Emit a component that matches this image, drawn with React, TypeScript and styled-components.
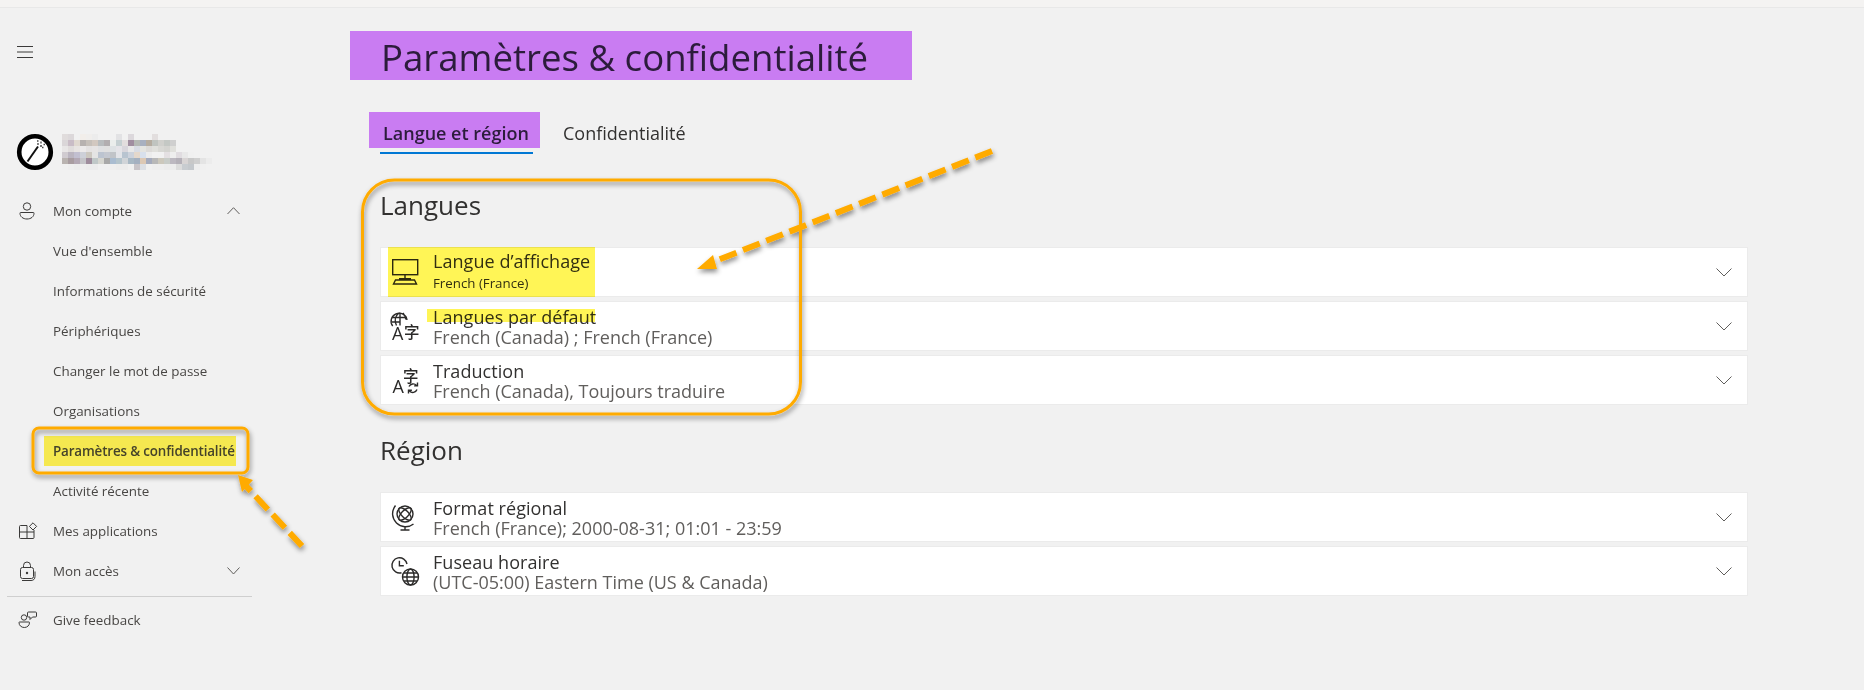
import React from "react";
import styled, { createGlobalStyle } from "styled-components";

const FONT = `"Open Sans", "Noto Sans CJK SC", sans-serif`;

const GlobalStyle = createGlobalStyle`
  html, body {
    margin: 0;
    padding: 0;
    background: #f1f1f1;
    font-family: ${FONT};
  }
  * { box-sizing: border-box; }
`;

const Page = styled.div`
  position: relative;
  width: 1864px;
  height: 690px;
  overflow: hidden;
  background: #f1f1f1;
`;

const TopStrip = styled.div`
  height: 8px;
  background: #f4f3f2;
  border-bottom: 1px solid #e8e8e8;
`;

const Shell = styled.div`
  display: flex;
`;

const Sidebar = styled.aside`
  width: 350px;
  flex: none;
  padding-top: 38px;
`;

const MenuButton = styled.div`
  display: flex;
  margin-left: 17px;
  height: 12px;
`;

const Profile = styled.div`
  display: flex;
  align-items: center;
  gap: 8px;
  margin: 75px 0 20px 16px;
  height: 38px;
`;

const Nav = styled.nav`
  width: 252px;
`;

const NavRow = styled.div<{ $sub?: boolean }>`
  display: flex;
  align-items: center;
  height: 40px;
  padding: 0 12px 0 ${(p) => (p.$sub ? "53px" : "18px")};
  font-size: 13.4px;
  color: #484644;
`;

const NavIcon = styled.span`
  display: flex;
  width: 20px;
  margin-right: 15px;
`;

const NavLabel = styled.span<{ $active?: boolean }>`
  ${(p) =>
    p.$active &&
    `
    margin-left: -9px;
    padding: 0 0 0 9px;
    width: 192px;
    line-height: 30px;
    font-weight: 600;
    white-space: nowrap;
    letter-spacing: -0.15px;
    color: #45432a;
    background: #f5e850;
  `}
`;

const NavChevron = styled.span`
  display: flex;
  margin-left: auto;
`;

const Divider = styled.div`
  height: 1px;
  margin: 5px 0 3px 7px;
  background: #cfcfcf;
`;

const Main = styled.main`
  flex: none;
  width: 1398px;
  padding-top: 23px;
`;

const Title = styled.h1`
  display: block;
  width: 562px;
  height: 49px;
  margin: 0;
  padding-left: 31px;
  font-size: 36.6px;
  line-height: 52px;
  font-weight: 400;
  white-space: nowrap;
  color: #2c1c3c;
  background: #c97cf2;
`;

const Tabs = styled.div`
  display: flex;
  margin: 32px 0 0 19px;
`;

const Tab = styled.div`
  display: flex;
  flex-direction: column;
`;

const TabLabel = styled.div<{ $active?: boolean }>`
  height: 36px;
  width: ${(p) => (p.$active ? "171px" : "auto")};
  padding-left: ${(p) => (p.$active ? "14px" : "23px")};
  line-height: 43px;
  font-size: 18px;
  white-space: nowrap;
  font-weight: ${(p) => (p.$active ? 600 : 400)};
  color: ${(p) => (p.$active ? "#2c1c3c" : "#323130")};
  background: ${(p) => (p.$active ? "#c97cf2" : "transparent")};
`;

const TabLine = styled.div`
  width: 153px;
  height: 2px;
  margin: 4px 0 0 11px;
  background: #0078d4;
`;

const Section = styled.section`
  margin: 35px 0 0 30px;
`;

const Heading = styled.h2`
  height: 32px;
  margin: 0 0 26px;
  font-size: 26px;
  line-height: 32px;
  font-weight: 400;
  color: #323130;
`;

const Rows = styled.div`
  display: flex;
  flex-direction: column;
  gap: 4px;
  margin-bottom: 29px;
`;

const Row = styled.div`
  position: relative;
  display: flex;
  width: 1368px;
  height: 50px;
  padding-left: 10px;
  background: #ffffff;
  border: 1px solid #ebebeb;
`;

const Highlight = styled.div<{ $left: number; $top: number; $width: number; $height: number }>`
  position: absolute;
  left: ${(p) => p.$left}px;
  top: ${(p) => p.$top}px;
  width: ${(p) => p.$width}px;
  height: ${(p) => p.$height}px;
  background: #fff556;
  mix-blend-mode: multiply;
`;

const RowIcon = styled.div`
  display: flex;
  align-items: center;
  width: 28px;
  flex: none;
  margin-right: 14px;
`;

const RowText = styled.div<{ $small?: boolean }>`
  display: flex;
  flex-direction: column;
  padding-top: ${(p) => (p.$small ? "3px" : "5px")};
`;

const RowTitle = styled.div`
  font-size: 18px;
  line-height: 20px;
  letter-spacing: 0.05px;
  color: #323130;
`;

const RowSub = styled.div<{ $small?: boolean }>`
  font-size: ${(p) => (p.$small ? "13.3px" : "18px")};
  line-height: 20px;
  margin-top: ${(p) => (p.$small ? "2px" : "0")};
  color: ${(p) => (p.$small ? "#323130" : "#605e5c")};
`;

const RowChevron = styled.div`
  display: flex;
  align-items: center;
  margin-left: auto;
  margin-right: 15px;
`;

const Annotations = styled.svg`
  position: absolute;
  left: 0;
  top: 0;
  pointer-events: none;
`;

const IconSvg = styled.svg`
  overflow: visible;
`;

const Chevron = ({ up, w = 16, h = 8, color = "#605e5c" }: { up?: boolean; w?: number; h?: number; color?: string }) => (
  <svg width={w} height={h + 1} viewBox={`0 0 ${w} ${h + 1}`}>
    <polyline
      points={up ? `0.5,${h} ${w / 2},0.7 ${w - 0.5},${h}` : `0.5,0.5 ${w / 2},${h} ${w - 0.5},0.5`}
      fill="none"
      stroke={color}
      strokeWidth="1"
    />
  </svg>
);

const IconStroke = { fill: "none", stroke: "#3b3a39", strokeWidth: 1 };
const RowStroke = { fill: "none", stroke: "#2b2a29", strokeWidth: 1.4 };

const MonitorIcon = () => (
  <IconSvg width="28" height="28" viewBox="0 0 28 28">
    <rect x="1.7" y="1.7" width="25" height="15" {...RowStroke} />
    <path d="M14 17v4M8 20.800h12M4.500 22h19l2 4H2.500z" {...RowStroke} />
  </IconSvg>
);

const GlyphA = styled.text`
  font-family: "Open Sans", sans-serif;
  fill: #2b2a29;
`;

const GlyphZi = styled.text`
  font-family: "Noto Sans CJK SC", sans-serif;
  font-weight: 500;
  fill: #2b2a29;
`;

const LanguageIcon = () => (
  <IconSvg width="28" height="28" viewBox="0 0 28 28">
    <path d="M1.700 14A8 8 0 1 1 16 8M9 0.500v13M1 5.500h15M1 10h8M5.500 13.500c-2-4-2-9 3-13M12 1c1.700 2 2.700 4 2.700 6.500" {...RowStroke} />
    <GlyphA x="1" y="28" fontSize="18">A</GlyphA>
    <GlyphZi x="13" y="25.500" fontSize="15.500">字</GlyphZi>
  </IconSvg>
);

const TranslateIcon = () => (
  <IconSvg width="28" height="28" viewBox="0 0 28 28">
    <GlyphZi x="12" y="15.500" fontSize="15.500">字</GlyphZi>
    <GlyphA x="1.500" y="27" fontSize="18">A</GlyphA>
    <path d="M18 20.500a4.500 4.500 0 0 1 7.500-1M26.500 16.500v3.400h-3.400M26 23.500a4.500 4.500 0 0 1-7.500 1.500M17.500 27.500v-3.200h3.400" {...RowStroke} />
  </IconSvg>
);

const GlobeStandIcon = () => (
  <IconSvg width="28" height="28" viewBox="0 0 28 28">
    <circle cx="14" cy="11" r="8" {...RowStroke} />
    <ellipse cx="14" cy="11" rx="3.500" ry="8" transform="rotate(45 14 11)" {...RowStroke} />
    <ellipse cx="14" cy="11" rx="3.500" ry="8" transform="rotate(-45 14 11)" {...RowStroke} />
    <path d="M4.500 2.500c-4.500 6-3.500 13 1 17.500s12 5 17 1M14 23v4M9.500 27h9" {...RowStroke} />
  </IconSvg>
);

const ClockGlobeIcon = () => (
  <IconSvg width="28" height="28" viewBox="0 0 28 28">
    <path d="M10.500 15.700A7.600 7.600 0 1 1 16 7" {...RowStroke} />
    <path d="M8.400 3.800v5h4.400" {...RowStroke} />
    <circle cx="19.500" cy="20" r="8" {...RowStroke} />
    <ellipse cx="19.500" cy="20" rx="3.600" ry="8" {...RowStroke} />
    <path d="M11.500 20h16M13 16h13M13 24h13" {...RowStroke} />
  </IconSvg>
);

const HamburgerIcon = () => (
  <svg width="16" height="12" viewBox="0 0 16 12">
    <path d="M0 0.500h16M0 6h16M0 11.500h16" fill="none" stroke="#3b3a39" strokeWidth="1" />
  </svg>
);

const PersonIcon = () => (
  <svg width="20" height="18" viewBox="0 0 20 18">
    <circle cx="9" cy="4.500" r="3.700" {...IconStroke} />
    <path d="M2.500 10.500h13c.4 0 .5.300.5.700 0 3.500-3 5.800-7 5.800s-7-2.300-7-5.800c0-.4.100-.7.500-.7z" {...IconStroke} />
  </svg>
);

const AppsIcon = () => (
  <svg width="20" height="18" viewBox="0 0 20 18">
    <path d="M2.500 3.500h6.500v13H2.500a1 1 0 0 1-1-1v-11a1 1 0 0 1 1-1zM1.500 10h14.500M9 16.500h6a1 1 0 0 0 1-1V8" {...IconStroke} />
    <path d="M15 0.800l3.600 3.600-3.600 3.600-3.600-3.600z" {...IconStroke} />
  </svg>
);

const LockIcon = () => (
  <svg width="20" height="20" viewBox="0 0 20 20">
    <path d="M5.500 6.500V4.500a3.500 3.500 0 0 1 7 0v2" {...IconStroke} />
    <rect x="2.500" y="6.500" width="13" height="11" rx="2" {...IconStroke} />
    <circle cx="9" cy="12" r="1.200" fill="#3b3a39" />
    <path d="M4 19.500h9c2.500 0 4-1.500 4-4v-5" {...IconStroke} />
  </svg>
);

const FeedbackIcon = () => (
  <svg width="20" height="18" viewBox="0 0 20 18">
    <circle cx="6" cy="6.500" r="2.700" {...IconStroke} />
    <path d="M1.500 11h9.500c.3 0 .5.200.5.500 0 3-2.300 5-5.200 5S1 14.500 1 11.500c0-.3.200-.5.500-.5z" {...IconStroke} />
    <path d="M10.500 1h7a1 1 0 0 1 1 1v3a1 1 0 0 1-1 1h-3l-2.500 2.500V6h-1.500a1 1 0 0 1-1-1V2a1 1 0 0 1 1-1z" {...IconStroke} />
  </svg>
);

const WandAvatar = () => (
  <svg width="38" height="38" viewBox="0 0 38 38">
    <circle cx="19" cy="19" r="15.800" fill="#fff" stroke="#000" strokeWidth="4.600" />
    <path d="M11.500 28.500L22 13.500" stroke="#111" strokeWidth="2" fill="none" />
    <path d="M22 10v2M25 8.500v2M24 13h2M27.500 11.500h1.500M21 8h1.500M26 14.500h1.500" stroke="#444" strokeWidth="1.300" fill="none" />
  </svg>
);

const NAME_PIXELS: string[][] = [
  ["e0dcdc", "dcd8da", "f1f1f1", "f2eeea", "f0eeec", "ececec", "f1f1f1", "f1f1f1", "f1f1f1", "e2e2e4", "f1f1f1", "dcd8dc", "f1f1f1", "f1f1f1", "f1f1f1", "e2dede", "f1f1f1"],
  ["dad6d8", "c9bcc6", "e0d8d0", "b7b2b0", "c6c0ba", "d2c8c0", "b8bcbe", "b2aeb0", "eaeeec", "c5d0d2", "e2dede", "a08ea0", "b4b8b4", "a8b0c0", "b5aca0", "c0c4c0", "d0d0cc", "c4c8c4", "cfcfcf"],
  ["e8e6e6", "e0dcdc", "e8e4e2", "eceaea", "e4e2e2", "e6e4e4", "dfe0e2", "e0e0e0", "dde2e4", "e4e4e8", "d8d6dc", "e8e8e8", "d8dce4", "e4e4e0", "dcdad8", "e0e0dc", "d8d8d4", "d4d4d0", "e0e0dc"],
  ["d0cbd0", "bbb5c0", "c2bfd0", "cdd0d8", "ccc8c0", "e4e4e4", "bcc4d0", "c4c8d0", "c0c4c8", "e2e4e8", "b8c4d0", "ccd2dc", "e4d8cc", "d8e0ec", "ececec", "f1f1f1", "f1f1f1", "e4e0e2", "eeeeee", "e0dce0", "e8e8e8", "f0f0f0"],
  ["b9b3b0", "a89ca0", "b3a8b4", "c4c4c8", "9e8c9c", "c0c8c8", "d6d6d0", "a8a8a8", "a9bcd0", "b4c4cc", "d0d4d8", "a8b8c4", "a4b0c0", "dcc8b4", "a4aabc", "b8b8b8", "ccc8bc", "c8ccc8", "bcb8c0", "b4b0b8", "d8d4d4", "c8c8c8", "cfcfcf", "e4e4e4", "ececec"],
  ["f0f0f0", "eeeeee", "ececec", "eeeeee", "ececec", "ececec", "f0f0f0", "f0f0f0", "eeeeee", "ececec", "ececec", "f0f0f0", "c8c4c8", "dcdfe4", "f0f0f0", "eeeeee", "eeeeee", "ececec", "ececec", "dcdcdc", "c8ccd0", "c4c8cc", "eeeeee", "f0f0f0"],
];

const BlurredName = () => (
  <svg width="150" height="36" viewBox="0 0 150 36" shapeRendering="crispEdges">
    {NAME_PIXELS.map((row, y) =>
      row.map((c, x) => <rect key={`${x}-${y}`} x={x * 6} y={y * 6} width="6" height="6" fill={`#${c}`} />)
    )}
  </svg>
);

interface SettingRow {
  icon: React.ReactNode;
  title: string;
  sub: string;
  small?: boolean;
  marks?: { left: number; top: number; width: number; height: number };
}

const languageRows: SettingRow[] = [
  { icon: <MonitorIcon />, title: "Langue d’affichage", sub: "French (France)", small: true, marks: { left: 7, top: -1, width: 207, height: 50 } },
  { icon: <LanguageIcon />, title: "Langues par défaut", sub: "French (Canada) ; French (France)", marks: { left: 46, top: 7, width: 168, height: 13 } },
  { icon: <TranslateIcon />, title: "Traduction", sub: "French (Canada), Toujours traduire" },
];

const regionRows: SettingRow[] = [
  { icon: <GlobeStandIcon />, title: "Format régional", sub: "French (France); 2000-08-31; 01:01 - 23:59" },
  { icon: <ClockGlobeIcon />, title: "Fuseau horaire", sub: "(UTC-05:00) Eastern Time (US & Canada)" },
];

const subLinks = ["Vue d'ensemble", "Informations de sécurité", "Périphériques", "Changer le mot de passe", "Organisations"];

const SettingsRows = ({ rows }: { rows: SettingRow[] }) => (
  <Rows>
    {rows.map((r) => (
      <Row key={r.title}>
        {r.marks && <Highlight $left={r.marks.left} $top={r.marks.top} $width={r.marks.width} $height={r.marks.height} />}
        <RowIcon>{r.icon}</RowIcon>
        <RowText $small={r.small}>
          <RowTitle>{r.title}</RowTitle>
          <RowSub $small={r.small}>{r.sub}</RowSub>
        </RowText>
        <RowChevron>
          <Chevron />
        </RowChevron>
      </Row>
    ))}
  </Rows>
);

const App: React.FC = () => {
  return (
    <Page>
      <GlobalStyle />
      <TopStrip />
      <Shell>
        <Sidebar>
          <MenuButton>
            <HamburgerIcon />
          </MenuButton>
          <Profile>
            <WandAvatar />
            <BlurredName />
          </Profile>
          <Nav>
            <NavRow>
              <NavIcon><PersonIcon /></NavIcon>
              <span>Mon compte</span>
              <NavChevron><Chevron up w={13} h={7} /></NavChevron>
            </NavRow>
            {subLinks.map((l) => (
              <NavRow $sub key={l}>{l}</NavRow>
            ))}
            <NavRow $sub><NavLabel $active>Paramètres &amp; confidentialité</NavLabel></NavRow>
            <NavRow $sub>Activité récente</NavRow>
            <NavRow>
              <NavIcon><AppsIcon /></NavIcon>
              <span>Mes applications</span>
            </NavRow>
            <NavRow>
              <NavIcon><LockIcon /></NavIcon>
              <span>Mon accès</span>
              <NavChevron><Chevron w={13} h={7} /></NavChevron>
            </NavRow>
            <Divider />
            <NavRow>
              <NavIcon><FeedbackIcon /></NavIcon>
              <span>Give feedback</span>
            </NavRow>
          </Nav>
        </Sidebar>
        <Main>
          <Title>Paramètres &amp; confidentialité</Title>
          <Tabs>
            <Tab>
              <TabLabel $active>Langue et région</TabLabel>
              <TabLine />
            </Tab>
            <Tab>
              <TabLabel>Confidentialité</TabLabel>
            </Tab>
          </Tabs>
          <Section>
            <Heading>Langues</Heading>
            <SettingsRows rows={languageRows} />
            <Heading>Région</Heading>
            <SettingsRows rows={regionRows} />
          </Section>
        </Main>
      </Shell>
      <Annotations width="1864" height="690" viewBox="0 0 1864 690">
        <defs>
          <filter id="annotShadow" x="-10%" y="-10%" width="120%" height="130%">
            <feDropShadow dx="1" dy="3" stdDeviation="2.500" floodColor="#000" floodOpacity="0.45" />
          </filter>
        </defs>
        <g filter="url(#annotShadow)" fill="none" stroke="#ffab00">
          <rect x="362.500" y="180" width="438" height="234" rx="32" strokeWidth="3" />
          <rect x="33" y="428" width="215" height="45" rx="6" strokeWidth="3" />
          <path d="M992 151L708 264" strokeWidth="6" strokeDasharray="18 7" />
          <path d="M302 546L246 486" strokeWidth="6" strokeDasharray="18 7" />
          <path d="M697 269l16-14 4 14z" fill="#ffab00" stroke="none" />
          <path d="M238 475l15 5-11 12z" fill="#ffab00" stroke="none" />
        </g>
      </Annotations>
    </Page>
  );
};

export default App;
